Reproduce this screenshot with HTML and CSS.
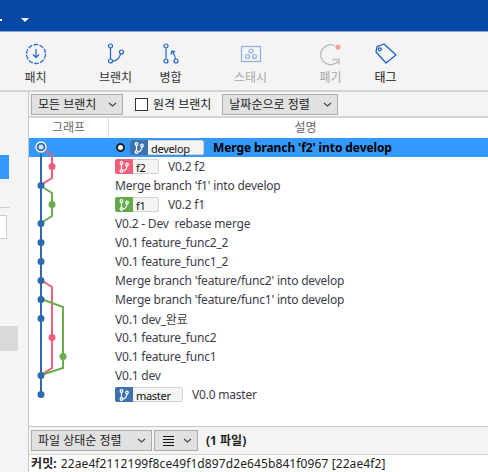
FILE: index.html
```html
<!DOCTYPE html>
<html lang="ko">
<head>
    <meta charset="UTF-8">
    <meta name="viewport" content="width=device-width, initial-scale=1.0">
    <title>커밋 그래프</title>
    <link rel="stylesheet" href="styles.css">
</head>
<body>
    <div class="titlebar">
        <span class="title-dash"></span>
        <span class="title-arrow"></span>
    </div>

    <div class="toolbar">
        <div class="tool">
            <svg class="tool-icon" width="26" height="26" viewBox="0 0 26 26" fill="none" stroke="#2a6ed4">
                <circle cx="13" cy="13" r="9.5" stroke-width="1.3" stroke-dasharray="4.6 1.4"/>
                <path d="M13 8v8M10 13.5l3 3 3-3" stroke-width="1.3"/>
            </svg>
            <span>패치</span>
        </div>
        <div class="tool tool-far">
            <svg class="tool-icon" width="26" height="26" viewBox="0 0 26 26" fill="none" stroke="#1f62c8" stroke-width="1.2">
                <circle cx="7.500" cy="5" r="2"/>
                <circle cx="7.500" cy="20" r="2"/>
                <circle cx="18.500" cy="11" r="2"/>
                <path d="M7.500 7v11M9.500 20c4 0 7-3.500 8.300-7.300"/>
            </svg>
            <span>브랜치</span>
        </div>
        <div class="tool">
            <svg class="tool-icon" width="26" height="26" viewBox="0 0 26 26" fill="none" stroke="#1f62c8" stroke-width="1.2">
                <circle cx="8" cy="5" r="2"/>
                <circle cx="8" cy="20" r="2"/>
                <circle cx="18" cy="20" r="2"/>
                <path d="M8 7v11" stroke="#6f9fe6" stroke-width="2"/>
                <path d="M17.500 18c-.5-3-1.500-5-3-7.500M13 13.500l1-3.500 3.300 1"/>
            </svg>
            <span>병합</span>
        </div>
        <div class="tool tool-far tool-off">
            <svg class="tool-icon" width="26" height="26" viewBox="0 0 26 26" fill="none" stroke="#8fb0e6" stroke-width="1.200">
                <rect x="3.500" y="5.500" width="19" height="15"/>
                <circle cx="13" cy="10" r="2"/>
                <circle cx="9.500" cy="15.500" r="2"/>
                <circle cx="16.500" cy="15.500" r="2"/>
            </svg>
            <span>스태시</span>
        </div>
        <div class="tool tool-far tool-off">
            <svg class="tool-icon" width="26" height="26" viewBox="0 0 26 26" fill="none" stroke="#b4b8c0" stroke-width="1.300">
                <path d="M16.500 4.500A10 10 0 1 0 20 20.500"/>
                <path d="M14.500 18.500H21v5"/>
                <circle cx="20" cy="6" r="2.600" fill="#fb9d92" stroke="none"/>
            </svg>
            <span>폐기</span>
        </div>
        <div class="tool">
            <svg class="tool-icon" width="26" height="26" viewBox="0 0 26 26" fill="none" stroke="#1f62c8" stroke-width="1.300">
                <path d="M4 5.700L11 3L23 14L13 22L3 11Z" stroke-linejoin="round"/>
                <circle cx="6.800" cy="8.300" r="1.500"/>
            </svg>
            <span class="tool-dark">태그</span>
        </div>
    </div>

    <div class="workspace">
        <aside class="sidebar">
            <div class="side-selected"></div>
            <div class="side-line"></div>
            <div class="side-input"></div>
            <div class="side-block"></div>
        </aside>

        <main class="main">
            <div class="filters">
                <button class="combo combo-branches">모든 브랜치<svg class="chevron" width="9" height="5" viewBox="0 0 9 5"><path d="M1 1l3.500 3L8 1"/></svg></button>
                <label class="remote"><span class="checkbox"></span>원격 브랜치</label>
                <button class="combo combo-sort">날짜순으로 정렬<svg class="chevron" width="9" height="5" viewBox="0 0 9 5"><path d="M1 1l3.500 3L8 1"/></svg></button>
            </div>

            <div class="col-head">
                <div class="col-graph">그래프</div>
                <div class="col-desc">설명</div>
            </div>

            <div class="commits">
                <div class="row row-selected">
                    <span class="head-mark"></span>
                    <span class="tag tag-blue tag-develop">
                        <span class="tag-icon"><svg width="12" height="14" viewBox="0 0 12 14" fill="none" stroke="#fff" stroke-width="1.200"><circle cx="3.500" cy="3" r="1.300"/><circle cx="3.500" cy="11" r="1.300"/><circle cx="9" cy="4.500" r="1.300"/><path d="M3.500 4.500v5M5 11c2.500-.5 3.700-2.500 4-5"/></svg></span>
                        <span class="tag-name">develop</span>
                    </span>
                    <span class="msg-bold">Merge branch 'f2' into develop</span>
                </div>
                <div class="row">
                    <span class="tag tag-pink tag-short">
                        <span class="tag-icon"><svg width="12" height="14" viewBox="0 0 12 14" fill="none" stroke="#fff" stroke-width="1.200"><circle cx="3.500" cy="3" r="1.300"/><circle cx="3.500" cy="11" r="1.300"/><circle cx="9" cy="4.500" r="1.300"/><path d="M3.500 4.500v5M5 11c2.500-.5 3.700-2.500 4-5"/></svg></span>
                        <span class="tag-name">f2</span>
                    </span>
                    V0.2 f2
                </div>
                <div class="row">Merge branch 'f1' into develop</div>
                <div class="row">
                    <span class="tag tag-green tag-short">
                        <span class="tag-icon"><svg width="12" height="14" viewBox="0 0 12 14" fill="none" stroke="#fff" stroke-width="1.200"><circle cx="3.500" cy="3" r="1.300"/><circle cx="3.500" cy="11" r="1.300"/><circle cx="9" cy="4.500" r="1.300"/><path d="M3.500 4.500v5M5 11c2.500-.5 3.700-2.500 4-5"/></svg></span>
                        <span class="tag-name">f1</span>
                    </span>
                    V0.2 f1
                </div>
                <div class="row">V0.2 - Dev&nbsp; rebase merge</div>
                <div class="row">V0.1 feature_func2_2</div>
                <div class="row">V0.1 feature_func1_2</div>
                <div class="row">Merge branch 'feature/func2' into develop</div>
                <div class="row">Merge branch 'feature/func1' into develop</div>
                <div class="row">V0.1 dev_완료</div>
                <div class="row">V0.1 feature_func2</div>
                <div class="row">V0.1 feature_func1</div>
                <div class="row">V0.1 dev</div>
                <div class="row">
                    <span class="tag tag-blue tag-master">
                        <span class="tag-icon"><svg width="12" height="14" viewBox="0 0 12 14" fill="none" stroke="#fff" stroke-width="1.200"><circle cx="3.500" cy="3" r="1.300"/><circle cx="3.500" cy="11" r="1.300"/><circle cx="9" cy="4.500" r="1.300"/><path d="M3.500 4.500v5M5 11c2.500-.5 3.700-2.500 4-5"/></svg></span>
                        <span class="tag-name">master</span>
                    </span>
                    V0.0 master
                </div>

                <!-- graph: x/y are relative to the list -->
                <svg class="graph" width="60" height="270" viewBox="0 0 60 270" fill="none" stroke-width="2">
                    <path d="M12 9v247" stroke="#2e6bae"/>
                    <path d="M15 12l8 5v23l-11 7" stroke="#ee5f7c"/>
                    <path d="M15 50l8 5v23l-11 7" stroke="#69ad4d"/>
                    <path d="M12 142l11 7v81l-11 7" stroke="#ee5f7c"/>
                    <path d="M12 161l22 8v61l-22 7" stroke="#69ad4d"/>
                    <g fill="#2e6bae">
                        <circle cx="12" cy="47.500" r="3.500"/>
                        <circle cx="12" cy="85.500" r="3.500"/>
                        <circle cx="12" cy="104.500" r="3.500"/>
                        <circle cx="12" cy="123.500" r="3.500"/>
                        <circle cx="12" cy="142.500" r="3.500"/>
                        <circle cx="12" cy="161.500" r="3.500"/>
                        <circle cx="12" cy="180.500" r="3.500"/>
                        <circle cx="12" cy="237.500" r="3.500"/>
                        <circle cx="12" cy="256.500" r="3.500"/>
                    </g>
                    <circle cx="23" cy="28.500" r="3.500" fill="#ee5f7c"/>
                    <circle cx="23" cy="66.500" r="3.500" fill="#69ad4d"/>
                    <circle cx="23" cy="199.500" r="3.500" fill="#ee5f7c"/>
                    <circle cx="34" cy="218.500" r="3.500" fill="#69ad4d"/>
                    <circle cx="12" cy="9" r="5" fill="#2e6bae" stroke="#fff" stroke-width="1.300"/>
                    <circle cx="12" cy="9" r="2.500" fill="#cfe4fa" stroke="none"/>
                </svg>
            </div>

            <div class="file-bar">
                <button class="combo combo-files">파일 상태순 정렬<svg class="chevron" width="9" height="5" viewBox="0 0 9 5"><path d="M1 1l3.500 3L8 1"/></svg></button>
                <button class="combo combo-view">
                    <svg class="list-icon" width="11" height="11" viewBox="0 0 11 11"><path d="M0 1.500h11M0 4.500h11M0 7.500h11M0 10.500h11"/></svg>
                    <svg class="chevron" width="9" height="5" viewBox="0 0 9 5"><path d="M1 1l3.500 3L8 1"/></svg>
                </button>
                <span class="file-count">(1 파일)</span>
            </div>

            <div class="commit-line"><b class="commit-label">커밋:</b><span>22ae4f2112199f8ce49f1d897d2e645b841f0967 [22ae4f2]</span></div>
        </main>
    </div>
</body>
</html>
```

FILE: styles.css
```css
* {
    box-sizing: border-box;
}

html, body {
    height: 100%;
}

body {
    margin: 0;
    display: flex;
    flex-direction: column;
    overflow: hidden;
    background: #f4f4f4;
    color: #222;
    font-family: "Noto Sans", "Noto Sans CJK KR", sans-serif;
    font-size: 12px;
}

/* Title bar */
.titlebar {
    height: 32px;
    flex: none;
    display: flex;
    align-items: center;
    padding-top: 8px;
    background: #0747a6;
    border-bottom: 1px solid #8ba4cc;
}

.title-dash {
    width: 2px;
    height: 2px;
    background: #fff;
}

.title-arrow {
    margin-left: 19px;
    border-left: 4px solid transparent;
    border-right: 4px solid transparent;
    border-top: 4px solid #fff;
}

/* Toolbar */
.toolbar {
    height: 60px;
    flex: none;
    display: flex;
    padding: 9px 0 0 8px;
    border-bottom: 2px solid #d4d4d4;
}

.tool {
    width: 55px;
    display: flex;
    flex-direction: column;
    align-items: center;
    color: #333;
    line-height: 16px;
}

.tool-far {
    margin-left: 25px;
}

.tool-icon {
    margin-bottom: 3px;
}

.tool-off span {
    color: #a8a8a8;
}

.tool-dark {
    color: #111;
}

/* Left panel */
.workspace {
    flex: 1;
    min-height: 0;
    display: flex;
}

.sidebar {
    width: 29px;
    flex: none;
    border-right: 1px solid #c8c8c8;
}

.side-selected {
    width: 9px;
    height: 24px;
    margin-top: 63px;
    background: #3399ff;
}

.side-line {
    width: 10px;
    height: 1px;
    margin-top: 28px;
    background: #cfcfcf;
}

.side-input {
    width: 7px;
    height: 24px;
    margin-top: 7px;
    background: #fff;
    border: 1px solid #ccc;
    border-left: 0;
}

.side-block {
    width: 18px;
    height: 25px;
    margin-top: 87px;
    background: #d9d9d9;
}

/* Main column */
.main {
    flex: 1;
    min-width: 0;
    display: flex;
    flex-direction: column;
}

.filters {
    height: 26px;
    flex: none;
    display: flex;
    align-items: center;
    padding-left: 2px;
    border-bottom: 2px solid #d4d4d4;
}

.combo {
    height: 21px;
    display: flex;
    align-items: center;
    justify-content: space-between;
    padding: 0 5px 0 6px;
    background: #e1e1e1;
    border: 1px solid #adadad;
    color: #222;
    font: inherit;
}

.combo-branches {
    width: 92px;
}

.combo-sort {
    width: 116px;
    margin-left: 11px;
}

.combo-files {
    width: 121px;
}

.combo-view {
    width: 44px;
    margin-left: 2px;
    padding-left: 8px;
}

.chevron {
    fill: none;
    stroke: #444;
    stroke-width: 1.100;
}

.list-icon {
    stroke: #111;
    stroke-width: 1;
}

.remote {
    display: flex;
    align-items: center;
    margin-left: 12px;
    gap: 5px;
}

.checkbox {
    width: 13px;
    height: 13px;
    background: #fff;
    border: 1px solid #333;
}

.col-head {
    height: 20px;
    flex: none;
    display: flex;
    background: #fff;
    color: #666;
    text-align: center;
    line-height: 19px;
}

.col-graph {
    width: 80px;
    border-right: 1px solid #ddd;
}

.col-desc {
    flex: 1;
    padding-left: 14px;
}

/* Commit list */
.commits {
    position: relative;
    flex: 1;
    min-height: 0;
    background: #fff;
}

.row {
    height: 19px;
    display: flex;
    align-items: center;
    padding-left: 86px;
    color: #3c3c48;
    letter-spacing: -0.2px;
    white-space: nowrap;
}

.row-selected {
    background: #3399ff;
    color: #000;
}

.msg-bold {
    font-weight: 700;
    letter-spacing: -0.1px;
}

.head-mark {
    width: 9px;
    height: 9px;
    margin: 0 5px 0 1px;
    background: #fff;
    border: 2px solid #222;
    border-radius: 50%;
}

.tag {
    height: 15px;
    display: flex;
    margin-right: 9px;
    background: #f4f4f4;
    border: 1px solid #d2d2d2;
    border-radius: 2px;
    color: #111;
}

.tag-icon {
    width: 18px;
    margin: -1px 0 -1px -1px;
    display: flex;
    align-items: center;
    justify-content: center;
    border-radius: 2px 0 0 2px;
}

.tag-blue .tag-icon {
    background: #3d72ad;
}

.tag-pink .tag-icon {
    background: #f05e7b;
}

.tag-green .tag-icon {
    background: #63aa4a;
}

.tag-name {
    padding-left: 3px;
    font-size: 11px;
    letter-spacing: -0.3px;
    line-height: 15px;
}

.tag-develop {
    width: 74px;
}

.tag-short {
    width: 44px;
}

.tag-master {
    width: 68px;
}

.graph {
    position: absolute;
    top: 0;
    left: 0;
}

/* Bottom bars */
.file-bar {
    height: 28px;
    flex: none;
    display: flex;
    align-items: center;
    padding: 0 0 1px 2px;
    border-top: 1px solid #c8c8c8;
}

.file-count {
    margin-left: 8px;
    font-weight: 700;
}

.commit-line {
    height: 18px;
    flex: none;
    padding-left: 2px;
    background: #fff;
    border-top: 1px solid #d4d4d4;
    letter-spacing: 0.1px;
    line-height: 17px;
    white-space: nowrap;
}

.commit-label {
    margin-right: 4px;
}
```
